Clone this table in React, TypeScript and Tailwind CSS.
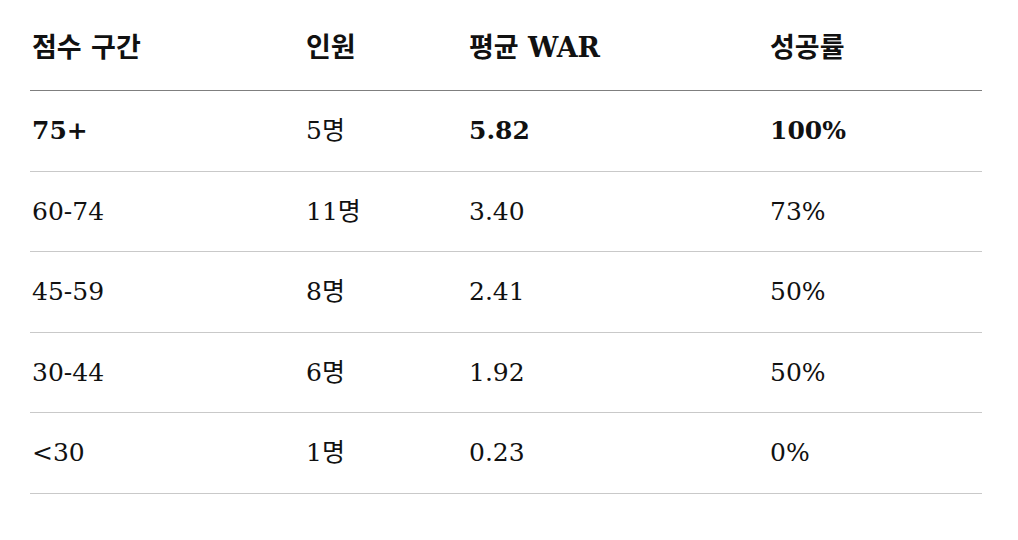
const rows = [
  { range: "75+", count: "5명", war: "5.82", rate: "100%", strong: true },
  { range: "60-74", count: "11명", war: "3.40", rate: "73%" },
  { range: "45-59", count: "8명", war: "2.41", rate: "50%" },
  { range: "30-44", count: "6명", war: "1.92", rate: "50%" },
  { range: "<30", count: "1명", war: "0.23", rate: "0%" },
];

const cols = "grid grid-cols-[276px_163px_301px_212px]";

export default function App() {
  return (
    <div
      className="min-h-[540px] w-[1018px] bg-white px-[30px] text-[#111111]"
      style={{ fontFamily: '"DejaVu Serif", "Noto Sans CJK KR", serif' }}
    >
      <div className="w-[952px]">
        <div className={`${cols} h-[91px] items-center border-b border-[#7f7f7f] pt-[7px] text-[27px] font-bold`}>
          <div className="pl-[2px]">점수 구간</div>
          <div>인원</div>
          <div>평균 WAR</div>
          <div>성공률</div>
        </div>
        {rows.map((r) => (
          <div
            key={r.range}
            className={`${cols} h-[80.5px] items-center border-b border-[#c9c9c9] text-[25px]`}
          >
            <div className={`pl-[2px] ${r.strong ? "font-bold" : ""}`}>{r.range}</div>
            <div>{r.count}</div>
            <div className={r.strong ? "font-bold" : ""}>{r.war}</div>
            <div className={r.strong ? "font-bold" : ""}>{r.rate}</div>
          </div>
        ))}
      </div>
    </div>
  );
}
